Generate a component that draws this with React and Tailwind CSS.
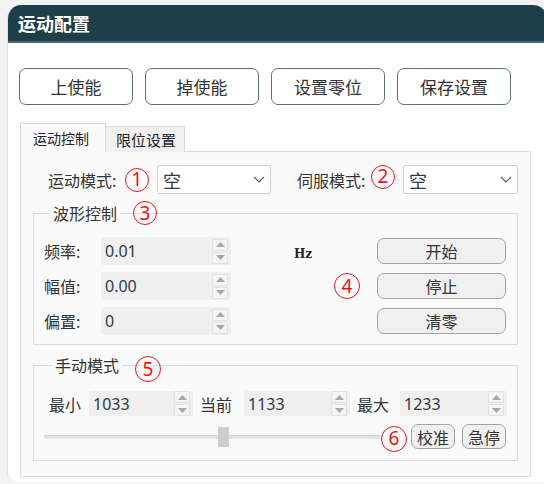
import React from "react";

const Circ = ({ n, className = "" }) => (
  <span
    className={`inline-flex items-center justify-center w-[24px] h-[24px] rounded-full border-[1.5px] border-[#e8141b] text-[#e8141b] text-[19px] leading-none font-['Noto_Sans',sans-serif] shrink-0 ${className}`}
  >
    {n}
  </span>
);

const Chevron = () => (
  <svg width="12" height="7" viewBox="0 0 12 7" className="shrink-0">
    <path d="M1 1 L6 6 L11 1" fill="none" stroke="#5a5a5a" strokeWidth="1.1" />
  </svg>
);

const Spinner = () => (
  <div className="flex flex-col gap-[1px] w-[16px] shrink-0">
    <div className="h-[12px] flex items-center justify-center border border-[#e2e2e2] bg-[#f4f4f4] rounded-[1px]">
      <svg width="9" height="5" viewBox="0 0 9 5">
        <path d="M0 5 L4.5 0 L9 5 Z" fill="#a8a8a8" />
      </svg>
    </div>
    <div className="h-[12px] flex items-center justify-center border border-[#e2e2e2] bg-[#f4f4f4] rounded-[1px]">
      <svg width="9" height="5" viewBox="0 0 9 5">
        <path d="M0 0 L4.5 5 L9 0 Z" fill="#a8a8a8" />
      </svg>
    </div>
  </div>
);

const NumInput = ({ value, className }) => (
  <div className={`flex items-center bg-[#efefef] rounded-[2px] pl-[4px] pr-[3px] shrink-0 ${className}`}>
    <span className="flex-1 text-[16px] leading-none text-[#2f3b44] font-['Noto_Sans',sans-serif]">{value}</span>
    <Spinner />
  </div>
);

const Select = ({ className }) => (
  <div className={`flex items-center justify-between bg-white border border-[#cfcfcf] rounded-[2px] pl-[5px] pr-[5px] shrink-0 ${className}`}>
    <span className="text-[18px] leading-none text-[#2b3a44]">空</span>
    <Chevron />
  </div>
);

const TopBtn = ({ children }) => (
  <button className="w-[114px] h-[37px] rounded-[7px] border-[1.5px] border-[#5e727b] bg-white text-[17px] text-[#333] flex items-center justify-center">
    {children}
  </button>
);

const GrayBtn = ({ children, className }) => (
  <button className={`rounded-[7px] border-[1.5px] border-[#a3a3a3] bg-[#f0f0f0] text-[16px] leading-none text-[#333] flex items-center justify-center shrink-0 ${className}`}>
    {children}
  </button>
);

export default function App() {
  return (
    <div className="w-[544px] h-[484px] bg-[#f3f3f3] pt-[5px] pl-[7px] overflow-hidden font-['Noto_Sans_CJK_SC','Noto_Sans',sans-serif]">
      <div className="w-[540px] h-[477px] bg-white rounded-t-[14px] rounded-bl-[10px] border-l border-[#e0e0e0] overflow-hidden flex flex-col">
        {/* header */}
        <div className="h-[38px] bg-[#1c3f4a] border-b-[2px] border-[#4a6872] flex items-center pl-[10px] shrink-0">
          <span className="text-white text-[18px] font-bold leading-none">运动配置</span>
        </div>

        {/* top buttons */}
        <div className="flex gap-[12px] pl-[11px] mt-[25px]">
          <TopBtn>上使能</TopBtn>
          <TopBtn>掉使能</TopBtn>
          <TopBtn>设置零位</TopBtn>
          <TopBtn>保存设置</TopBtn>
        </div>

        {/* tabs */}
        <div className="flex items-end ml-[12px] mt-[18px] h-[29px] relative z-10">
          <div className="w-[86px] h-[29px] bg-[#fafafa] border border-b-0 border-[#d9d9d9] flex items-center pl-[12px] text-[14px] text-[#222] leading-none">
            运动控制
          </div>
          <div className="w-[79px] h-[26px] bg-[#f0f0f0] border border-l-0 border-b-0 border-[#d9d9d9] flex items-center pl-[10px] text-[15px] text-[#222] leading-none">
            限位设置
          </div>
        </div>

        {/* pane */}
        <div className="ml-[12px] w-[511px] -mt-px bg-[#fafafa] border border-[#dcdcdc] pt-[13px] pb-[15px]">
          {/* row 1 */}
          <div className="flex items-center h-[29px] pl-[27px]">
            <span className="w-[77px] text-[16px] text-[#333] leading-none">运动模式:</span>
            <Circ n="1" />
            <Select className="ml-[8px] w-[114px] h-[29px]" />
            <span className="ml-[26px] w-[74px] text-[16px] text-[#333] leading-none">伺服模式:</span>
            <Circ n="2" className="-mt-[6px]" />
            <Select className="ml-[8px] w-[115px] h-[29px]" />
          </div>

          {/* group 1 */}
          <fieldset className="ml-[12px] mt-[9px] w-[485px] border border-[#dcdcdc] pt-[14px] pb-[9px] pl-[10px]">
            <legend className="ml-[6px] px-[3px] text-[16px] leading-[20px] text-[#333] relative">
              波形控制
              <Circ n="3" className="absolute left-[calc(100%+13px)] top-[-2px]" />
            </legend>
            <div className="flex flex-col gap-[7px]">
              <div className="flex items-center h-[28px]">
                <span className="w-[57px] text-[16px] text-[#333] leading-none">频率:</span>
                <NumInput value="0.01" className="w-[130px] h-[28px]" />
                <div className="w-[146px] pl-[63px]">
                  <span className="font-['DejaVu_Serif',serif] font-bold text-[12px] text-[#222]">Hz</span>
                </div>
                <GrayBtn className="w-[129px] h-[26px]">开始</GrayBtn>
              </div>
              <div className="flex items-center h-[28px]">
                <span className="w-[57px] text-[16px] text-[#333] leading-none">幅值:</span>
                <NumInput value="0.00" className="w-[130px] h-[28px]" />
                <div className="w-[146px] pl-[103px] flex">
                  <Circ n="4" className="w-[26px] h-[26px]" />
                </div>
                <GrayBtn className="w-[129px] h-[26px]">停止</GrayBtn>
              </div>
              <div className="flex items-center h-[28px]">
                <span className="w-[57px] text-[16px] text-[#333] leading-none">偏置:</span>
                <NumInput value="0" className="w-[130px] h-[28px]" />
                <div className="w-[146px]" />
                <GrayBtn className="w-[129px] h-[26px]">清零</GrayBtn>
              </div>
            </div>
          </fieldset>

          {/* group 2 */}
          <fieldset className="ml-[12px] mt-[10px] w-[485px] border border-[#dcdcdc] pt-[16px] pb-[11px] pl-[10px]">
            <legend className="ml-[8px] px-[3px] text-[16px] leading-[20px] text-[#333] relative">
              手动模式
              <Circ n="5" className="absolute left-[calc(100%+13px)] top-[1px] w-[26px] h-[26px]" />
            </legend>
            <div className="flex items-center h-[25px] pl-[5px]">
              <span className="w-[40px] text-[16px] text-[#333] leading-none">最小</span>
              <NumInput value="1033" className="w-[104px] h-[25px]" />
              <span className="ml-[7px] w-[44px] text-[16px] text-[#333] leading-none">当前</span>
              <NumInput value="1133" className="w-[106px] h-[25px]" />
              <span className="ml-[7px] w-[43px] text-[16px] text-[#333] leading-none">最大</span>
              <NumInput value="1233" className="w-[107px] h-[25px]" />
            </div>
            <div className="flex items-center h-[25px] mt-[8px]">
              <div className="relative w-[336px] h-[20px] flex items-center">
                <div className="w-full h-[4px] bg-[#e3e3e3] border-t border-[#d2d2d2]" />
                <div className="absolute left-[174px] top-0 w-[11px] h-[20px] bg-[#cdcdcd]" />
              </div>
              <Circ n="6" className="ml-[1px] w-[26px] h-[26px] mt-[4px]" />
              <GrayBtn className="ml-[4px] w-[44px] h-[25px]">校准</GrayBtn>
              <GrayBtn className="ml-[7px] w-[44px] h-[25px]">急停</GrayBtn>
            </div>
          </fieldset>
        </div>
      </div>
    </div>
  );
}
